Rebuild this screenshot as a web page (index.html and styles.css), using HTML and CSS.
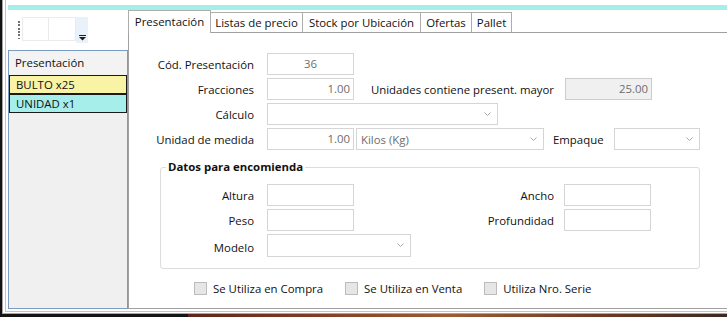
FILE: index.html
```html
<!DOCTYPE html>
<html lang="es">
<head>
  <meta charset="UTF-8">
  <title>Presentaciones</title>
  <link rel="stylesheet" href="styles.css">
</head>
<body>
  <div class="frame">
    <div class="outer">
      <div class="inner">
        <div class="accent"></div>
        <div class="main">
          <aside class="side">
            <div class="toolbar">
              <span class="grip"></span>
              <span class="tool-box"></span>
              <span class="tool-box"></span>
              <span class="tool-more">
                <svg width="7" height="6" viewBox="0 0 7 6"><rect x="0" y="0" width="7" height="1" fill="#1e1e1e"/><polygon points="0,2 7,2 3.5,5.5" fill="#1e1e1e"/></svg>
              </span>
            </div>
            <div class="list">
              <div class="list-head">Presentación</div>
              <div class="list-row row-yellow">BULTO x25</div>
              <div class="list-row row-cyan">UNIDAD x1</div>
            </div>
          </aside>

          <section class="tabs">
            <nav class="tab-strip">
              <span class="tab active tab-pres">Presentación</span>
              <span class="tab tab-precio">Listas de precio</span>
              <span class="tab tab-stock">Stock por Ubicación</span>
              <span class="tab tab-ofertas">Ofertas</span>
              <span class="tab tab-pallet">Pallet</span>
            </nav>
            <div class="tab-page">
              <div class="form">
                <div class="row">
                  <label class="lbl">Cód. Presentación</label>
                  <div class="field center">36</div>
                </div>
                <div class="row">
                  <label class="lbl">Fracciones</label>
                  <div class="field">1.00</div>
                  <label class="lbl-wide">Unidades contiene present. mayor</label>
                  <div class="field disabled">25.00</div>
                </div>
                <div class="row">
                  <label class="lbl">Cálculo</label>
                  <div class="combo combo-calc"><span></span><svg class="chev" width="7" height="4" viewBox="0 0 7 4"><polyline points="0.5,0.5 3.5,3.5 6.5,0.5" fill="none" stroke="#a8a8a8"/></svg></div>
                </div>
                <div class="row row-last">
                  <label class="lbl">Unidad de medida</label>
                  <div class="field">1.00</div>
                  <div class="combo combo-unit"><span>Kilos (Kg)</span><svg class="chev" width="7" height="4" viewBox="0 0 7 4"><polyline points="0.5,0.5 3.5,3.5 6.5,0.5" fill="none" stroke="#a8a8a8"/></svg></div>
                  <label class="lbl-pack">Empaque</label>
                  <div class="combo combo-pack"><span></span><svg class="chev" width="7" height="4" viewBox="0 0 7 4"><polyline points="0.5,0.5 3.5,3.5 6.5,0.5" fill="none" stroke="#a8a8a8"/></svg></div>
                </div>

                <div class="group">
                  <div class="group-title">Datos para encomienda</div>
                  <div class="group-body">
                    <div class="row">
                      <label class="lbl lbl-g">Altura</label>
                      <div class="field"></div>
                      <label class="lbl-wide lbl-gw">Ancho</label>
                      <div class="field"></div>
                    </div>
                    <div class="row">
                      <label class="lbl lbl-g">Peso</label>
                      <div class="field"></div>
                      <label class="lbl-wide lbl-gw">Profundidad</label>
                      <div class="field"></div>
                    </div>
                    <div class="row row-model">
                      <label class="lbl lbl-g">Modelo</label>
                      <div class="combo combo-model"><span></span><svg class="chev" width="7" height="4" viewBox="0 0 7 4"><polyline points="0.5,0.5 3.5,3.5 6.5,0.5" fill="none" stroke="#a8a8a8"/></svg></div>
                    </div>
                  </div>
                </div>

                <div class="checks">
                  <span class="check"><span class="box"></span>Se Utiliza en Compra</span>
                  <span class="check"><span class="box"></span>Se Utiliza en Venta</span>
                  <span class="check"><span class="box"></span>Utiliza Nro. Serie</span>
                </div>
              </div>
            </div>
          </section>
        </div>
      </div>
    </div>
  </div>
  <div class="desk"></div>
</body>
</html>
```

FILE: styles.css
```css
body {
  margin: 0;
  width: 727px;
  height: 317px;
  overflow: hidden;
  background: #fff;
  font-family: "Open Sans", "Liberation Sans", sans-serif;
  font-size: 11.4px;
  color: #111;
}

.frame {
  height: 314px;
  box-sizing: border-box;
  border-left: 2px solid #121212;
}

.outer {
  height: 314px;
  box-sizing: border-box;
  border-left: 1px solid #a6a6a6;
  border-bottom: 1px solid #a6a6a6;
  padding: 0 0 1px 2px;
}

.inner {
  height: 100%;
  box-sizing: border-box;
  border-left: 1px solid #c4c4c4;
  border-bottom: 1px solid #c4c4c4;
  padding: 5px 0 2px 2px;
}

.accent {
  height: 5px;
  background: #a3efea;
}

.main {
  display: flex;
  height: 299px;
}

/* lista lateral */
.side {
  width: 120px;
  flex: none;
  display: flex;
  flex-direction: column;
}

.toolbar {
  display: flex;
  margin-top: 7px;
  height: 26px;
  padding-left: 10px;
}

.grip {
  width: 2px;
  height: 18px;
  margin: 4px 2px 0 0;
  background: repeating-linear-gradient(to bottom, #6f6f6f 0 2px, transparent 2px 3.3px);
}

.tool-box {
  width: 27px;
  height: 24px;
  box-sizing: border-box;
  border: 1px solid #ebebeb;
}

.tool-box + .tool-box {
  border-left: none;
}

.tool-more {
  width: 12px;
  height: 26px;
  box-sizing: border-box;
  background: #e9f1fa;
  display: flex;
  align-items: flex-end;
  justify-content: center;
  padding-bottom: 2px;
}

.list {
  margin-top: 7px;
  height: 259px;
  box-sizing: border-box;
  border: 1px solid #7b9cc0;
  background: #f0f0f0;
}

.list-head {
  height: 24px;
  line-height: 24px;
  padding-left: 6px;
  background: #f3f3f3;
}

.list-row {
  height: 19px;
  box-sizing: border-box;
  border: 1px solid #1a1a1a;
  line-height: 17px;
  padding-left: 6px;
}

.row-yellow { background: #f8f3a5; }
.row-cyan { background: #a6eeea; }

/* pestañas */
.tabs {
  flex: 1;
  min-width: 0;
  display: flex;
  flex-direction: column;
}

.tab-strip {
  display: flex;
  align-items: flex-end;
  height: 22px;
}

.tab {
  height: 20px;
  box-sizing: border-box;
  border-top: 1px solid #adadad;
  border-right: 1px solid #adadad;
  line-height: 19px;
  text-align: center;
  background: #fff;
  white-space: nowrap;
}

.tab.active {
  height: 23px;
  border-left: 1px solid #adadad;
  margin-bottom: -1px;
  line-height: 21px;
  position: relative;
  z-index: 1;
}

.tab-pres { width: 83px; }
.tab-precio { width: 92px; }
.tab-stock { width: 118px; }
.tab-ofertas { width: 51px; }
.tab-pallet { width: 40px; }

.tab-page {
  flex: 1;
  border-top: 1px solid #a0a0a0;
  border-left: 1px solid #a0a0a0;
  border-bottom: 1px solid #a0a0a0;
}

/* formulario */
.form {
  padding-top: 20px;
}

.row {
  display: flex;
  align-items: center;
  height: 22px;
  margin-bottom: 3px;
}

.row-last {
  margin-top: 1px;
}

.lbl {
  width: 125px;
  flex: none;
  text-align: right;
  margin-right: 13px;
  white-space: nowrap;
}

.lbl-g {
  width: 93px;
}

.lbl-wide {
  width: 200px;
  flex: none;
  text-align: right;
  margin-right: 11px;
  white-space: nowrap;
}

.lbl-gw {
  margin-right: 10px;
}

.lbl-pack {
  width: 50px;
  flex: none;
  margin: 0 11px 0 9px;
  white-space: nowrap;
}

.field {
  width: 87px;
  height: 22px;
  flex: none;
  box-sizing: border-box;
  border: 1px solid #d5d5d5;
  padding: 0 3px;
  line-height: 20px;
  text-align: right;
  color: #6d6d6d;
}

.center { text-align: center; }

.disabled {
  background: #f0f0f0;
  border-color: #cccccc;
}

.combo {
  height: 22px;
  flex: none;
  box-sizing: border-box;
  border: 1px solid #d5d5d5;
  display: flex;
  align-items: center;
  justify-content: space-between;
  padding: 0 6px 0 4px;
  color: #6d6d6d;
}

.combo-calc { width: 231px; }
.combo-unit { width: 188px; margin-left: 2px; }
.combo-pack { width: 86px; }
.combo-model { width: 144px; height: 23px; }

.row-model .lbl {
  padding-top: 5px;
}

/* grupo */
.group {
  margin: 17px 0 0 31px;
  width: 540px;
  height: 102px;
  box-sizing: border-box;
  border: 1px solid #dcdcdc;
  border-radius: 3px;
}

.group-title {
  width: fit-content;
  height: 16px;
  line-height: 16px;
  margin: -9px 0 0 5px;
  padding: 0 2px;
  background: #fff;
  font-weight: bold;
}

.group-body {
  margin-top: 9px;
}

.checks {
  display: flex;
  margin: 12px 0 0 65px;
}

.check {
  display: flex;
  align-items: center;
  margin-right: 22px;
  white-space: nowrap;
}

.box {
  width: 13px;
  height: 13px;
  box-sizing: border-box;
  border: 1px solid #bcbcbc;
  background: #e6e6e6;
  margin-right: 6px;
}

.desk {
  height: 3px;
  background: linear-gradient(90deg, #151515 0 188px, #5e2419 188px, #7d3a22 300px, #9c5c36 450px, #6e3a22 600px, #3b2a22 727px);
}
```
